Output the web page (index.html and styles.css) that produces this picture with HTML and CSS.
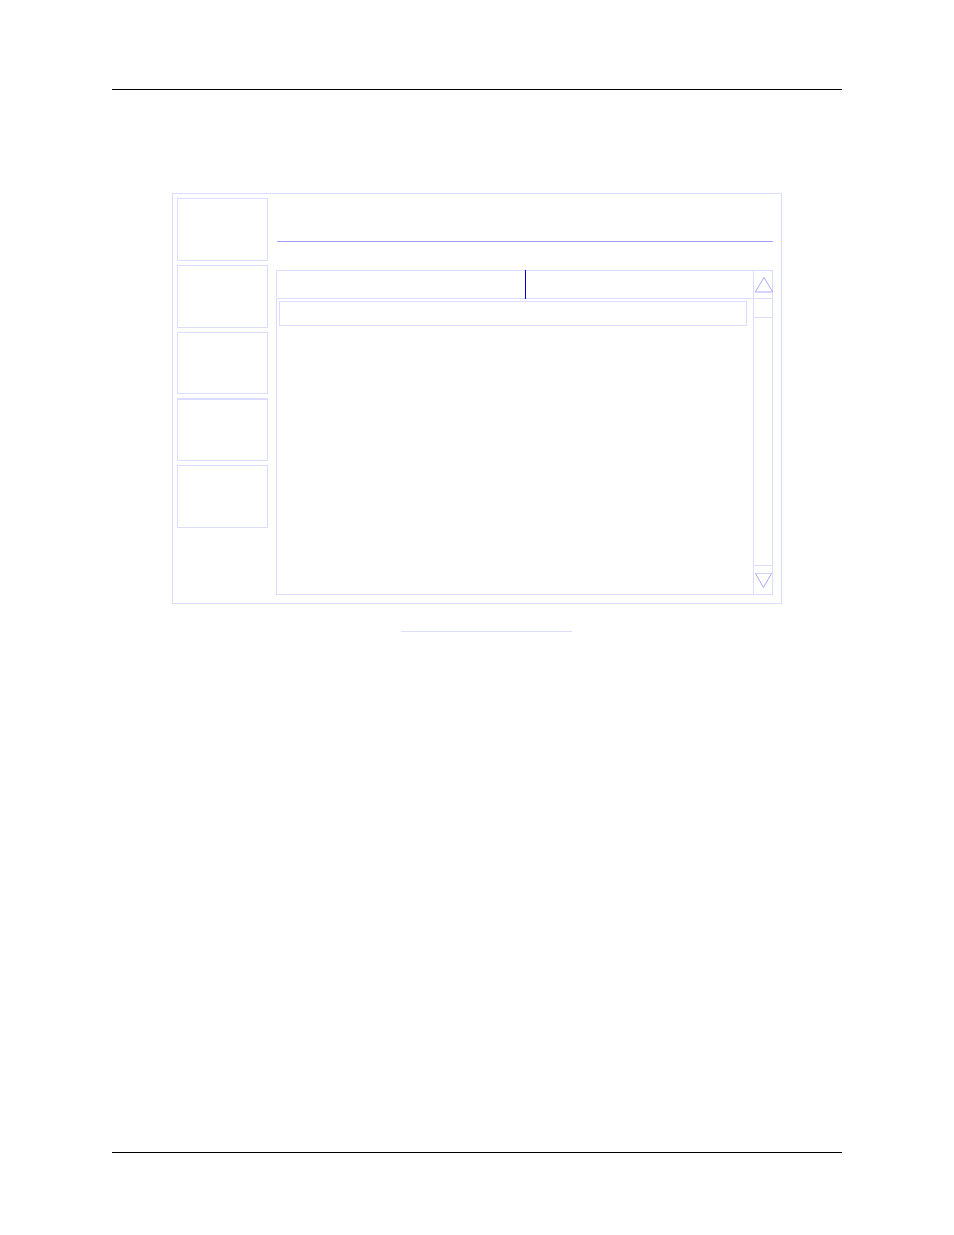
FILE: index.html
```html
<!DOCTYPE html>
<html lang="en">
<head>
    <meta charset="UTF-8">
    <meta name="viewport" content="width=device-width, initial-scale=1.0">
    <title>Device Screen</title>
    <link rel="stylesheet" href="styles.css">
</head>
<body>
    <div class="page">
        <main class="figure">
            <div class="screen">
                <nav class="softkeys">
                    <button class="softkey" aria-label="Key 1"></button>
                    <button class="softkey" aria-label="Key 2"></button>
                    <button class="softkey short" aria-label="Key 3"></button>
                    <button class="softkey active" aria-label="Key 4"></button>
                    <button class="softkey" aria-label="Key 5"></button>
                </nav>

                <section class="content">
                    <header class="title-bar"></header>
                    <div class="list">
                        <table class="list-table">
                            <thead>
                                <tr>
                                    <th class="col-name"></th>
                                    <th></th>
                                </tr>
                            </thead>
                            <tbody>
                                <tr>
                                    <td colspan="2"><div class="selected"></div></td>
                                </tr>
                            </tbody>
                        </table>

                        <div class="scrollbar">
                            <button class="scroll-up" aria-label="Scroll up">
                                <svg width="18" height="17" viewBox="0 0 18 17">
                                    <path class="arrow-base" d="M1 16H19"/>
                                    <path class="arrow" d="M1.5 15.5L10 1.5L18.5 15.5"/>
                                </svg>
                            </button>
                            <div class="thumb"></div>
                            <div class="track"></div>
                            <button class="scroll-down" aria-label="Scroll down">
                                <svg width="18" height="17" viewBox="0 0 18 17">
                                    <path class="arrow-base" d="M1 1.5H18"/>
                                    <path class="arrow" d="M1.5 1.5L9.5 15.5L17.5 1.5"/>
                                </svg>
                            </button>
                        </div>
                    </div>
                </section>
            </div>
            <div class="caption-line"></div>
        </main>
    </div>
</body>
</html>
```
FILE: styles.css
```css
* {
    box-sizing: border-box;
}
body {
    margin: 0;
    background-color: #fff;
    font-family: "Liberation Sans", Arial, sans-serif;
}
.page {
    display: flex;
    flex-direction: column;
    min-height: 100vh;
    padding: 89px 112px 82px;
}
.page::before,
.page::after {
    content: "";
    border-top: 1px solid #000;
}
.figure {
    flex: 1;
    padding: 103px 60px 0;
}
.screen {
    display: flex;
    gap: 8px;
    padding: 4px 8px 8px 4px;
    border: 1px solid #dcdcff;
}
button {
    margin: 0;
    padding: 0;
    border: 0;
    background: none;
    cursor: pointer;
}

/* Left column keys */
.softkeys {
    display: flex;
    flex-direction: column;
    gap: 4px;
    width: 91px;
}
.softkey {
    height: 63px;
    border: 1px solid #dcdcff;
}
.softkey.short {
    height: 62px;
}
.softkey.active {
    border-top-width: 2px;
}

/* Main area */
.content {
    flex: 1;
}
.title-bar {
    height: 44px;
    margin-left: 1px;
    border-bottom: 1px solid #9f9fff;
}
.list {
    display: flex;
    height: 325px;
    margin-top: 28px;
    border: 1px solid #dcdcff;
}
.list-table {
    flex: 1;
    align-self: flex-start;
    table-layout: fixed;
    border-spacing: 0;
}
.list-table th {
    height: 28px;
    padding: 0;
    border-bottom: 1px solid #dcdcff;
}
.list-table .col-name {
    position: relative;
    width: 249px;
}
.col-name::after {
    content: "";
    position: absolute;
    top: -1px;
    right: 0;
    bottom: -1px;
    width: 1px;
    background-color: #0000c8;
}
.list-table td {
    padding: 2px 6px 0 2px;
}
.selected {
    height: 25px;
    border: 1px solid #dcdcff;
}

/* Scrollbar */
.scrollbar {
    display: flex;
    flex-direction: column;
    width: 19px;
    border-left: 1px solid #dcdcff;
}
.scrollbar svg {
    display: block;
    overflow: visible;
}
.scroll-up {
    height: 28px;
    border-bottom: 1px solid #dcdcff;
}
.thumb {
    height: 19px;
    border-bottom: 1px solid #dcdcff;
}
.track {
    flex: 1;
}
.scroll-down {
    height: 29px;
    padding-top: 1px;
    border-top: 1px solid #dcdcff;
}
.arrow,
.arrow-base {
    fill: none;
    stroke: #a8a8f8;
}
.arrow-base {
    stroke: #d4d4ff;
}
.scroll-up .arrow-base {
    stroke-width: 2;
}

.caption-line {
    width: 171px;
    margin: 27px 0 0 229px;
    border-top: 1px solid #dcdcff;
}
```
